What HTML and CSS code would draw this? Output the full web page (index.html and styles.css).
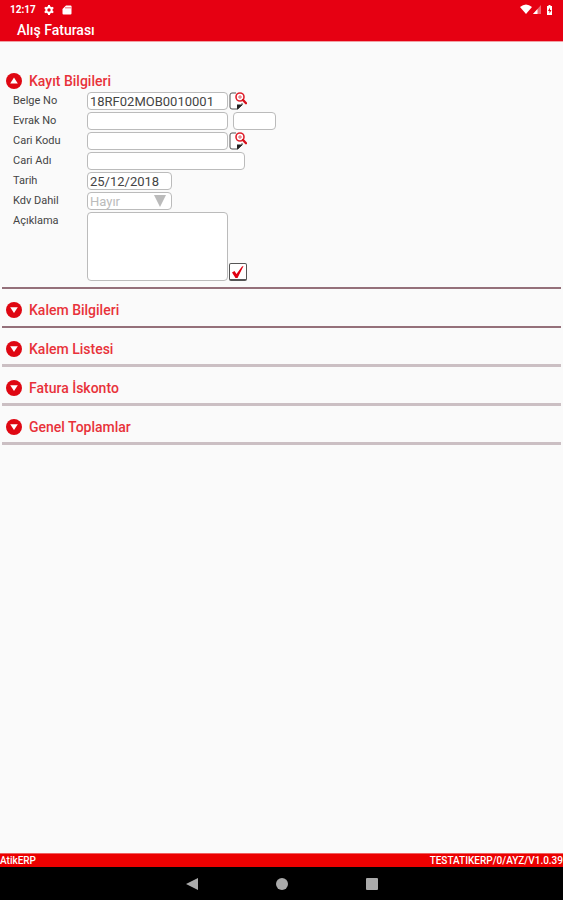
FILE: index.html
```html
<!DOCTYPE html>
<html lang="tr">
<head>
    <meta charset="UTF-8">
    <meta name="viewport" content="width=device-width, initial-scale=1.0">
    <title>Alış Faturası</title>
    <link rel="stylesheet" href="styles.css">
</head>
<body>
    <!-- Shared icons -->
    <svg class="sprite" aria-hidden="true">
        <symbol id="icon-down" viewBox="0 0 16 16">
            <circle cx="8" cy="8" r="8" fill="#df0712"/>
            <path d="M4.200 5.200h7.600L8 11z" fill="#fff"/>
        </symbol>
        <symbol id="icon-up" viewBox="0 0 16 16">
            <circle cx="8" cy="8" r="8" fill="#df0712"/>
            <path d="M4.200 10.400h7.600L8 4.600z" fill="#fff"/>
        </symbol>
        <symbol id="icon-lookup" viewBox="0 0 18 18">
            <path d="M7 1H3Q1 1 1 3v12q0 2 2 2h6l4-4v-2" fill="#fff" stroke="#555" stroke-width="1"/>
            <path d="M8 17.500v-5h6z" fill="#222"/>
            <circle cx="11" cy="5" r="4" fill="#fff" stroke="#e0202c" stroke-width="1.600"/>
            <path d="M9 5h4M11 3v4" stroke="#e0606a" stroke-width="1"/>
            <path d="M14 8l3 3.200" stroke="#d8101c" stroke-width="2.400" stroke-linecap="round"/>
        </symbol>
    </svg>

    <header class="header">
        <div class="status-bar">
            <span class="clock">12:17</span>
            <svg class="status-icon" viewBox="0 0 10 10" aria-hidden="true">
                <circle cx="5" cy="5" r="2.700" fill="none" stroke="#fff" stroke-width="2"/>
                <path d="M5 0v2M5 8v2M.7 2.500l1.700 1M7.600 6.500l1.700 1M.7 7.500l1.700-1M7.600 3.500l1.700-1" stroke="#fff" stroke-width="2"/>
            </svg>
            <svg class="status-icon" viewBox="0 0 10 10" aria-hidden="true">
                <path d="M4 .5h4.500q1 0 1 1v7q0 1-1 1h-7q-1 0-1-1V4z" fill="#fff"/>
                <path d="M4 2v1.500M6 2v1.500M8 2v1.500" stroke="#e60012" stroke-width=".8"/>
            </svg>
            <span class="spacer"></span>
            <svg class="signal-icons" viewBox="0 0 34 12" aria-hidden="true">
                <path d="M1 3q6-5 12 0L7 10z" fill="#fff"/>
                <path d="M22 1v9h-8z" fill="#fff" opacity=".4"/>
                <path d="M18.500 5v5H14z" fill="#fff"/>
                <path d="M28 2h1.500V1h2v1H33v9h-5z" fill="#fff"/>
                <path d="M31 3.500l-2 3.500h1.500v2.500l2-3.500H31z" fill="#e60012"/>
            </svg>
        </div>
        <h1 class="title">Alış Faturası</h1>
    </header>

    <main class="content">
        <section class="panel panel-open">
            <h2><button class="panel-toggle" type="button" aria-expanded="true"><svg class="toggle-icon"><use href="#icon-up"/></svg>Kayıt Bilgileri</button></h2>
            <form class="form">
                <label for="belgeNo">Belge No</label>
                <div class="field">
                    <input class="input-medium" id="belgeNo" type="text" value="18RF02MOB0010001">
                    <button class="icon-button" type="button" aria-label="Belge ara"><svg><use href="#icon-lookup"/></svg></button>
                </div>

                <label for="evrakNo">Evrak No</label>
                <div class="field field-split">
                    <input class="input-medium" id="evrakNo" type="text">
                    <input class="input-tiny" type="text" aria-label="Evrak sıra">
                </div>

                <label for="cariKodu">Cari Kodu</label>
                <div class="field">
                    <input class="input-medium" id="cariKodu" type="text">
                    <button class="icon-button" type="button" aria-label="Cari ara"><svg><use href="#icon-lookup"/></svg></button>
                </div>

                <label for="cariAdi">Cari Adı</label>
                <div class="field">
                    <input class="input-wide" id="cariAdi" type="text">
                </div>

                <label for="tarih">Tarih</label>
                <div class="field">
                    <input class="input-small" id="tarih" type="text" value="25/12/2018">
                </div>

                <label for="kdvDahil">Kdv Dahil</label>
                <div class="field">
                    <div class="select-box">
                        <select class="input-small" id="kdvDahil" disabled>
                            <option>Hayır</option>
                        </select>
                        <svg class="select-arrow" viewBox="0 0 12 12" aria-hidden="true"><path d="M0 0h12L6 12z" fill="#bbb"/></svg>
                    </div>
                </div>

                <label for="aciklama">Açıklama</label>
                <div class="field field-note">
                    <textarea class="input-medium" id="aciklama"></textarea>
                    <label class="tick">
                        <input type="checkbox" aria-label="Açıklama onay" checked>
                        <svg viewBox="0 0 18 18" aria-hidden="true"><path d="M3 9.500L5.500 8l2 3 5.500-7.500 1.500-.5L8.500 15H6.500z" fill="#e00010"/></svg>
                    </label>
                </div>
            </form>
        </section>

        <section class="panel">
            <h2><button class="panel-toggle" type="button" aria-expanded="false"><svg class="toggle-icon"><use href="#icon-down"/></svg>Kalem Bilgileri</button></h2>
        </section>
        <section class="panel panel-light">
            <h2><button class="panel-toggle" type="button" aria-expanded="false"><svg class="toggle-icon"><use href="#icon-down"/></svg>Kalem Listesi</button></h2>
        </section>
        <section class="panel panel-light">
            <h2><button class="panel-toggle" type="button" aria-expanded="false"><svg class="toggle-icon"><use href="#icon-down"/></svg>Fatura İskonto</button></h2>
        </section>
        <section class="panel panel-light">
            <h2><button class="panel-toggle" type="button" aria-expanded="false"><svg class="toggle-icon"><use href="#icon-down"/></svg>Genel Toplamlar</button></h2>
        </section>
    </main>

    <footer class="footer">
        <span>AtikERP</span>
        <span>TESTATIKERP/0/AYZ/V1.0.39</span>
    </footer>

    <nav class="nav-bar">
        <button type="button" aria-label="Geri"><svg viewBox="0 0 12 12"><path d="M12 0v12L0 6z"/></svg></button>
        <button type="button" aria-label="Ana ekran"><svg viewBox="0 0 12 12"><circle cx="6" cy="6" r="6"/></svg></button>
        <button type="button" aria-label="Son uygulamalar"><svg viewBox="0 0 12 12"><rect width="12" height="12" rx="1"/></svg></button>
    </nav>
</body>
</html>
```
FILE: styles.css
```css
* {
    margin: 0;
    padding: 0;
    box-sizing: border-box;
}

body {
    min-height: 100vh;
    display: flex;
    flex-direction: column;
    font-family: Roboto, "Liberation Sans", sans-serif;
    background: #fafafa;
    color: #444;
    overflow-x: hidden;
}

svg {
    display: block;
}

button {
    border: none;
    background: none;
    font: inherit;
    color: inherit;
    cursor: pointer;
}

.sprite {
    display: none;
}

/* Header */
.header {
    background: #e60012;
    color: #fff;
    border-bottom: 1px solid #f0a0a4;
}

.status-bar {
    height: 19px;
    display: flex;
    align-items: center;
    gap: 8px;
    padding: 0 10px;
}

.clock {
    font-size: 10px;
    font-weight: 700;
}

.status-icon {
    width: 10px;
    height: 10px;
}

.spacer {
    flex: 1;
}

.signal-icons {
    width: 34px;
    height: 12px;
}

.title {
    padding: 0 17px;
    font-size: 14px;
    font-weight: 500;
    line-height: 22px;
}

/* Panels */
.content {
    flex: 1;
    padding: 28px 2px 0;
}

.panel {
    border-bottom: 2px solid #94707a;
    padding-top: 10px;
    height: 39px;
}

.panel-light {
    border-bottom: 3px solid #cbbfc3;
}

.panel-open {
    height: auto;
    padding-top: 0;
}

.panel h2 {
    font-size: 14px;
    font-weight: 500;
}

.panel-toggle {
    display: flex;
    align-items: center;
    gap: 7px;
    padding-left: 4px;
    line-height: 22px;
    color: #e8323a;
}

.toggle-icon {
    width: 16px;
    height: 16px;
}

/* Form */
.form {
    display: grid;
    grid-template-columns: 74px 1fr;
    row-gap: 2px;
    padding: 0 0 6px 11px;
}

.form label {
    font-size: 11px;
    line-height: 18px;
}

.field {
    display: flex;
    align-items: center;
    gap: 1px;
}

.field-split {
    gap: 5px;
}

.field-note {
    align-items: flex-end;
}

.form input,
.form select,
.form textarea {
    height: 18px;
    padding: 0 2px;
    border: 1px solid #bbb;
    border-radius: 4px;
    background: #fff;
    color: #444;
    font-family: inherit;
    font-size: 13px;
}

.form textarea {
    display: block;
    height: 69px;
    resize: none;
}

.form .input-tiny {
    width: 43px;
}

.form .input-small {
    width: 85px;
}

.form .input-medium {
    width: 141px;
}

.form .input-wide {
    width: 158px;
}

.select-box {
    position: relative;
}

.form select {
    display: block;
    appearance: none;
    color: #bbb;
    opacity: 1;
}

.select-arrow {
    position: absolute;
    top: 3px;
    right: 6px;
    width: 12px;
    height: 12px;
    pointer-events: none;
}

.icon-button svg {
    width: 18px;
    height: 18px;
}

.tick {
    display: grid;
}

.tick input,
.tick svg {
    grid-area: 1 / 1;
    width: 18px;
    height: 18px;
}

.form .tick input {
    appearance: none;
    border: 1px solid #555;
    border-bottom-width: 2px;
    border-radius: 2px;
}

.tick svg {
    pointer-events: none;
    z-index: 1;
}

.tick input:not(:checked) + svg {
    visibility: hidden;
}

/* Footer */
.footer {
    display: flex;
    justify-content: space-between;
    background: #ec0000;
    border-top: 1px solid #f06060;
    color: #fff;
    font-size: 10px;
    font-weight: 500;
    line-height: 13px;
}

.nav-bar {
    height: 33px;
    display: flex;
    justify-content: center;
    align-items: center;
    gap: 78px;
    background: #000;
}

.nav-bar svg {
    width: 12px;
    height: 12px;
    fill: #aaa;
}
```
